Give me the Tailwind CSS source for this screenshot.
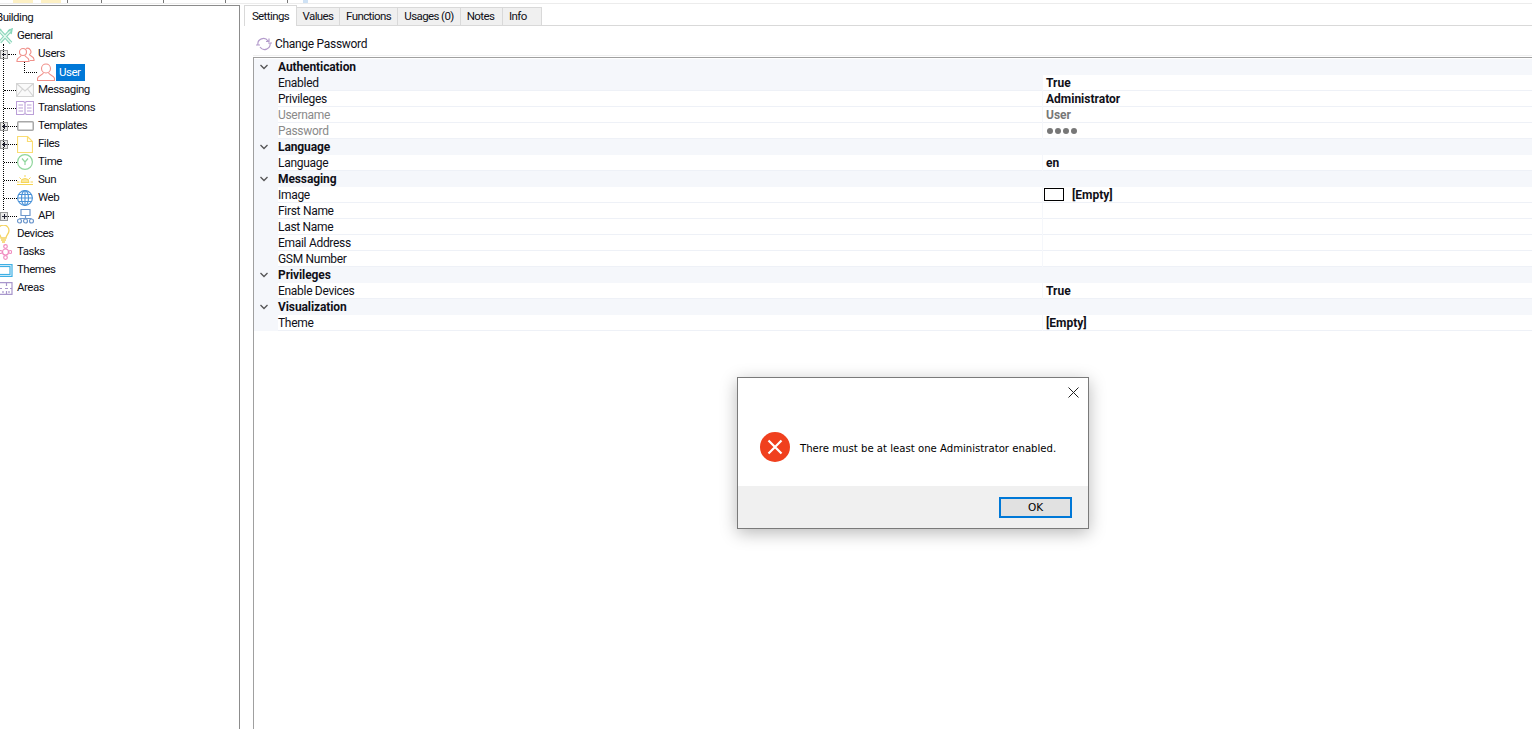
<!DOCTYPE html>
<html lang="en">
<head>
<meta charset="UTF-8">
<title>User settings</title>
<script src="https://cdn.jsdelivr.net/npm/@tailwindcss/browser@4"></script>
</head>
<body class="bg-white overflow-hidden h-[729px] relative text-[12px] text-[#101018] font-['Roboto','Noto_Sans',sans-serif]">

<!-- bottom edge of the ribbon above -->
<div class="flex h-[4px] border-b border-[#ececec]">
  <div class="w-[68px] h-[3px] border-r border-[#777] flex">
    <span class="ml-[13px] w-[20px] bg-[#fdf0c4]"></span>
    <span class="ml-[8px] w-[20px] bg-[#fdf0c4]"></span>
  </div>
  <div class="w-[34px] h-[3px] border-r border-[#777]"></div>
  <div class="w-[62px] h-[3px] border-r border-[#777]"></div>
  <div class="w-[62px] h-[3px] border-r border-[#777]"></div>
  <div class="w-[62px] h-[3px] border-r border-[#777]"></div>
  <div class="ml-[15px] w-[5px] h-[3px] bg-[#cfe2f5]"></div>
</div>

<div class="flex h-[725px]">
  <!-- Tree -->
  <aside class="relative w-[240px] shrink-0 mt-[1px] pt-[3px] border-t border-r border-[#8c8c8c] overflow-hidden">
    <div class="flex flex-col text-[11.500px] tracking-[-0.5px]">
      <div class="h-[18px] flex items-center -ml-[4px]">Building</div>

      <div class="h-[18px] flex items-center">
        <svg class="w-[15px] h-[17px] -ml-[2px] shrink-0" viewBox="0 0 15 17" fill="none">
          <path d="M2 3l11 12M13 2 2 14" stroke="#8ad6ba" stroke-width="3.400"/>
          <path d="M2 3l11 12M13 2 2 14" stroke="#e6f8f0" stroke-width="1.200"/>
          <path d="M0 5l3-4M10 3l4-2-1 5" stroke="#8ad6ba" stroke-width="1.500"/>
        </svg>
        <span class="ml-[4px]">General</span>
      </div>

      <div class="h-[18px] flex items-center">
        <span class="w-[8px] h-[9px] border border-[#9a9a9a] bg-[#e8e8e8] flex items-center justify-center shrink-0"><span class="w-[4px] h-px bg-[#223]"></span></span>
        <span class="w-[8px] border-t border-dotted border-black"></span>
        <svg class="w-[19px] h-[15px] shrink-0" viewBox="0 0 19 15" fill="none" stroke="#f0908a" stroke-width="1.100"><circle cx="7" cy="5" r="3.500"/><path d="M5 8.500C5 10 1 10.500 1 13.500V14.500h12v-1C13 10.500 9 10 9 8.500"/><path d="M10 1.500a3.500 3.500 0 0 1 3.500 6c0 1.500 4.500 2 4.500 5v1h-4"/></svg>
        <span class="ml-[3px]">Users</span>
      </div>

      <div class="h-[18px] flex items-center pl-[24px]">
        <span class="w-[13px] border-t border-dotted border-black"></span>
        <svg class="w-[18px] h-[18px] shrink-0" viewBox="0 0 18 18" fill="none" stroke="#f0908a" stroke-width="1.100"><circle cx="9" cy="5.500" r="4.500"/><path d="M6.500 9.500C6.500 12 .5 12.500 .5 15.500V17.500h17v-2c0-3-6-3.500-6-6"/></svg>
        <span class="bg-[#0078d7] text-white pl-[3px] h-[17px] w-[29px] ml-px leading-[17px]">User</span>
      </div>

      <div class="h-[18px] flex items-center pl-[4px]">
        <span class="w-[12px] border-t border-dotted border-black"></span>
        <svg class="w-[18px] h-[14px] shrink-0" viewBox="0 0 18 14" fill="#fafafa" stroke="#d4d4d4" stroke-width="1.200"><path d="M.5.500h17v13H.5z"/><path d="M.5.500 9 8l8.500-7.500M.5 13.500 6.500 6M17.500 13.500 11.500 6" fill="none"/></svg>
        <span class="ml-[4px]">Messaging</span>
      </div>

      <div class="h-[18px] flex items-center pl-[4px]">
        <span class="w-[12px] border-t border-dotted border-black"></span>
        <svg class="w-[18px] h-[14px] shrink-0" viewBox="0 0 18 14" fill="none" stroke="#bb9fd8" stroke-width="1.100"><path d="M.5.500h7l1.500 1 1.500-1h7v13h-7L9 12.500l-1.500 1h-7zM9 1.500v11M2.500 4h4.500M2.500 7h4.500M2.500 10h4.500M11 4h4.500M11 7h4.500M11 10h4.500"/></svg>
        <span class="ml-[4px]">Translations</span>
      </div>

      <div class="h-[18px] flex items-center">
        <span class="w-[8px] h-[9px] border border-[#9a9a9a] bg-[#e8e8e8] flex items-center justify-center shrink-0 relative"><span class="w-[5px] h-px bg-[#223]"></span><span class="absolute w-px h-[5px] bg-[#223]"></span></span>
        <span class="w-[9px] border-t border-dotted border-black"></span>
        <svg class="w-[17px] h-[10px] shrink-0" viewBox="0 0 17 10" fill="none" stroke="#a8a8a8" stroke-width="1.500"><rect x=".75" y=".75" width="15.500" height="8.500" rx="1"/></svg>
        <span class="ml-[4px]">Templates</span>
      </div>

      <div class="h-[18px] flex items-center">
        <span class="w-[8px] h-[9px] border border-[#9a9a9a] bg-[#e8e8e8] flex items-center justify-center shrink-0 relative"><span class="w-[5px] h-px bg-[#223]"></span><span class="absolute w-px h-[5px] bg-[#223]"></span></span>
        <span class="w-[9px] border-t border-dotted border-black"></span>
        <svg class="w-[16px] h-[17px] shrink-0" viewBox="0 0 16 17" fill="none" stroke="#f9dc72" stroke-width="1.200"><path d="M.5.500h10l5 5v11H.5zM10.500.500v5h5"/></svg>
        <span class="ml-[5px]">Files</span>
      </div>

      <div class="h-[18px] flex items-center pl-[4px]">
        <span class="w-[13px] border-t border-dotted border-black"></span>
        <svg class="w-[16px] h-[16px] shrink-0" viewBox="0 0 16 16" fill="none" stroke="#8fd69c" stroke-width="1.200"><circle cx="8" cy="8" r="7.400"/><path d="M5 4.500 8 8l3-3.500M8 8v3"/></svg>
        <span class="ml-[5px]">Time</span>
      </div>

      <div class="h-[18px] flex items-center pl-[4px]">
        <span class="w-[13px] border-t border-dotted border-black"></span>
        <svg class="w-[16px] h-[11px] shrink-0" viewBox="0 0 16 11" fill="#fbe79a" stroke="#f6d658"><path d="M4 7.500a4 4 0 0 1 8 0z"/><path d="M0 9.500h16M0 7h2.500M13.500 7H16M2.500 2.500l2 2M13.500 2.500l-2 2M8 0v2" fill="none"/></svg>
        <span class="ml-[5px]">Sun</span>
      </div>

      <div class="h-[18px] flex items-center pl-[4px]">
        <span class="w-[13px] border-t border-dotted border-black"></span>
        <svg class="w-[16px] h-[16px] shrink-0" viewBox="0 0 16 16" fill="none" stroke="#4a92d8" stroke-width="1.100"><circle cx="8" cy="8" r="7.400"/><ellipse cx="8" cy="8" rx="3.500" ry="7.400"/><path d="M8 .5v15M.5 8h15M1.500 4.500h13M1.500 11.500h13"/></svg>
        <span class="ml-[5px]">Web</span>
      </div>

      <div class="h-[18px] flex items-center">
        <span class="w-[8px] h-[9px] border border-[#9a9a9a] bg-[#e8e8e8] flex items-center justify-center shrink-0 relative"><span class="w-[5px] h-px bg-[#223]"></span><span class="absolute w-px h-[5px] bg-[#223]"></span></span>
        <span class="w-[9px] border-t border-dotted border-black"></span>
        <svg class="w-[17px] h-[15px] shrink-0" viewBox="0 0 17 15" fill="none" stroke="#6d97cc" stroke-width="1.200"><path d="M4 .5h9v6H4zM8.500 6.500V9M2.500 9.500h12"/><circle cx="2.500" cy="12" r="2"/><circle cx="8.500" cy="12" r="2"/><circle cx="14.500" cy="12" r="2"/></svg>
        <span class="ml-[4px]">API</span>
      </div>

      <div class="h-[18px] flex items-center">
        <svg class="w-[13px] h-[18px] -ml-[3px] shrink-0" viewBox="0 0 13 18" fill="none" stroke="#f4d25e" stroke-width="1.300"><path d="M4 13c0-3-3-4-3-7.500a5.500 5.500 0 0 1 11 0C12 9 9 10 9 13z"/><path d="M4 15h5M5 17h3"/></svg>
        <span class="ml-[7px]">Devices</span>
      </div>

      <div class="h-[18px] flex items-center">
        <svg class="w-[13px] h-[16px] -ml-px shrink-0" viewBox="0 0 13 16" fill="none" stroke="#f08cc0" stroke-width="1.200"><circle cx="6.500" cy="8" r="3"/><circle cx="6.500" cy="2.500" r="1.800"/><circle cx="6.500" cy="13.500" r="1.800"/><circle cx="1.800" cy="8" r="1.500"/><circle cx="11.200" cy="8" r="1.500"/></svg>
        <span class="ml-[5px]">Tasks</span>
      </div>

      <div class="h-[18px] flex items-center">
        <svg class="w-[13px] h-[13px] shrink-0" viewBox="0 0 13 13" fill="none" stroke="#3fb0e4" stroke-width="1.200"><rect x="-1" y=".6" width="13" height="11.800"/><rect x="-1" y="2.500" width="11" height="8"/></svg>
        <span class="ml-[4px]">Themes</span>
      </div>

      <div class="h-[18px] flex items-center">
        <svg class="w-[13px] h-[13px] shrink-0" viewBox="0 0 13 13" fill="none" stroke="#a896cc" stroke-width="1.200"><path d="M-1 .6h13v11.800H-1zM-1 6.500h3M5 6.500h3M10 6.500h2M6.500 1v3M6.500 9v3M3 9v2M9 9v2"/></svg>
        <span class="ml-[4px]">Areas</span>
      </div>
    </div>
    <!-- tree connector lines over the rows -->
    <div class="absolute left-[3px] top-[38px] h-[166px] border-l border-dotted border-black"></div>
    <div class="absolute left-[24px] top-[56px] h-[9px] border-l border-dotted border-black"></div>
  </aside>

  <!-- Main panel -->
  <main class="flex-1 min-w-0 pl-[4px] pt-[1px]">
    <div class="flex h-[21px] border-b border-[#d9d9d9] items-end text-[11.500px] tracking-[-0.6px]">
      <div class="h-[21px] w-[53px] bg-white border border-b-0 border-[#d9d9d9] flex items-start pt-[2px] justify-center -mb-px">Settings</div>
      <div class="h-[18px] w-[43px] bg-[#f0f0f0] border-t border-r border-[#d9d9d9] flex items-center justify-center">Values</div>
      <div class="h-[18px] w-[58px] bg-[#f0f0f0] border-t border-r border-[#d9d9d9] flex items-center justify-center">Functions</div>
      <div class="h-[18px] w-[63px] bg-[#f0f0f0] border-t border-r border-[#d9d9d9] flex items-center justify-center">Usages (0)</div>
      <div class="h-[18px] w-[42px] bg-[#f0f0f0] border-t border-r border-[#d9d9d9] flex items-center justify-center pr-[2px]">Notes</div>
      <div class="h-[18px] w-[39px] bg-[#f0f0f0] border-t border-r border-[#d9d9d9] flex items-center pl-[6px]">Info</div>
    </div>

    <div class="h-[30px] ml-[9px] pt-[7px] flex items-center border-b border-[#f0f0f0] mb-px">
      <svg class="w-[18px] h-[14px] ml-[2px] shrink-0" viewBox="0 0 18 14" fill="none" stroke="#b49ccc" stroke-width="1.200"><path d="M3 8a5.500 5.500 0 0 1 10-4M15 6a5.500 5.500 0 0 1-10 4M11 4.500h3v-3M1 8h4M13 6h4"/></svg>
      <span class="ml-[2px] tracking-[-0.3px]">Change Password</span>
    </div>

    <div class="ml-[9px] border-l border-t border-[#a0a0a0] h-[680px] pt-[1px] tracking-[-0.3px]">
      <div class="h-[16px] flex items-center bg-[#f5f7fb] font-bold tracking-[-0.1px]"><svg class="w-[24px] h-[8px] shrink-0" viewBox="0 0 24 8" fill="none" stroke="#555" stroke-width="1.300"><path d="M6.500 2 10 5.500 13.500 2"/></svg>Authentication</div>
      <div class="h-[16px] flex bg-[#f5f7fb]"><div class="w-[24px] shrink-0"></div><div class="w-[764px] shrink-0 flex items-center border-b border-[#eef1f7]">Enabled</div><div class="flex-1 flex items-center pl-[3px] ml-[1px] font-bold tracking-normal bg-white border-b border-[#eef1f7]">True</div></div>
      <div class="h-[16px] flex bg-[#f5f7fb]"><div class="w-[24px] shrink-0"></div><div class="w-[764px] shrink-0 flex items-center border-b border-[#eef1f7] bg-white">Privileges</div><div class="flex-1 flex items-center pl-[3px] ml-[1px] font-bold tracking-normal bg-white border-b border-[#eef1f7]">Administrator</div></div>
      <div class="h-[16px] flex bg-[#f5f7fb] text-[#8a8a8a]"><div class="w-[24px] shrink-0"></div><div class="w-[764px] shrink-0 flex items-center border-b border-[#eef1f7] bg-white">Username</div><div class="flex-1 flex items-center pl-[3px] ml-[1px] font-bold tracking-normal bg-white border-b border-[#eef1f7] text-[#777]">User</div></div>
      <div class="h-[16px] flex bg-[#f5f7fb] text-[#8a8a8a]"><div class="w-[24px] shrink-0"></div><div class="w-[764px] shrink-0 flex items-center border-b border-[#eef1f7] bg-white">Password</div><div class="flex-1 flex items-center gap-[2px] pl-[4px] ml-[1px] bg-white border-b border-[#eef1f7]"><span class="w-[6px] h-[6px] rounded-full bg-[#777]"></span><span class="w-[6px] h-[6px] rounded-full bg-[#777]"></span><span class="w-[6px] h-[6px] rounded-full bg-[#777]"></span><span class="w-[6px] h-[6px] rounded-full bg-[#777]"></span></div></div>

      <div class="h-[16px] flex items-center bg-[#f5f7fb] font-bold tracking-[-0.1px]"><svg class="w-[24px] h-[8px] shrink-0" viewBox="0 0 24 8" fill="none" stroke="#555" stroke-width="1.300"><path d="M6.500 2 10 5.500 13.500 2"/></svg>Language</div>
      <div class="h-[16px] flex bg-[#f5f7fb]"><div class="w-[24px] shrink-0"></div><div class="w-[764px] shrink-0 flex items-center border-b border-[#eef1f7] bg-white">Language</div><div class="flex-1 flex items-center pl-[3px] ml-[1px] font-bold tracking-normal bg-white border-b border-[#eef1f7]">en</div></div>

      <div class="h-[16px] flex items-center bg-[#f5f7fb] font-bold tracking-[-0.1px]"><svg class="w-[24px] h-[8px] shrink-0" viewBox="0 0 24 8" fill="none" stroke="#555" stroke-width="1.300"><path d="M6.500 2 10 5.500 13.500 2"/></svg>Messaging</div>
      <div class="h-[16px] flex bg-[#f5f7fb]"><div class="w-[24px] shrink-0"></div><div class="w-[764px] shrink-0 flex items-center border-b border-[#eef1f7] bg-white">Image</div><div class="flex-1 flex items-center ml-[1px] pl-[1px] font-bold tracking-normal bg-white border-b border-[#eef1f7]"><span class="w-[20px] h-[13px] border border-black mr-[8px]"></span>[Empty]</div></div>
      <div class="h-[16px] flex bg-[#f5f7fb]"><div class="w-[24px] shrink-0"></div><div class="w-[764px] shrink-0 flex items-center border-b border-[#eef1f7] bg-white">First Name</div><div class="flex-1 ml-[1px] bg-white border-b border-[#eef1f7]"></div></div>
      <div class="h-[16px] flex bg-[#f5f7fb]"><div class="w-[24px] shrink-0"></div><div class="w-[764px] shrink-0 flex items-center border-b border-[#eef1f7] bg-white">Last Name</div><div class="flex-1 ml-[1px] bg-white border-b border-[#eef1f7]"></div></div>
      <div class="h-[16px] flex bg-[#f5f7fb]"><div class="w-[24px] shrink-0"></div><div class="w-[764px] shrink-0 flex items-center border-b border-[#eef1f7] bg-white">Email Address</div><div class="flex-1 ml-[1px] bg-white border-b border-[#eef1f7]"></div></div>
      <div class="h-[16px] flex bg-[#f5f7fb]"><div class="w-[24px] shrink-0"></div><div class="w-[764px] shrink-0 flex items-center border-b border-[#eef1f7] bg-white">GSM Number</div><div class="flex-1 ml-[1px] bg-white border-b border-[#eef1f7]"></div></div>

      <div class="h-[16px] flex items-center bg-[#f5f7fb] font-bold tracking-[-0.1px]"><svg class="w-[24px] h-[8px] shrink-0" viewBox="0 0 24 8" fill="none" stroke="#555" stroke-width="1.300"><path d="M6.500 2 10 5.500 13.500 2"/></svg>Privileges</div>
      <div class="h-[16px] flex bg-[#f5f7fb]"><div class="w-[24px] shrink-0"></div><div class="w-[764px] shrink-0 flex items-center border-b border-[#eef1f7] bg-white">Enable Devices</div><div class="flex-1 flex items-center pl-[3px] ml-[1px] font-bold tracking-normal bg-white border-b border-[#eef1f7]">True</div></div>

      <div class="h-[16px] flex items-center bg-[#f5f7fb] font-bold tracking-[-0.1px]"><svg class="w-[24px] h-[8px] shrink-0" viewBox="0 0 24 8" fill="none" stroke="#555" stroke-width="1.300"><path d="M6.500 2 10 5.500 13.500 2"/></svg>Visualization</div>
      <div class="h-[16px] flex bg-[#f5f7fb]"><div class="w-[24px] shrink-0"></div><div class="w-[764px] shrink-0 flex items-center border-b border-[#eef1f7] bg-white">Theme</div><div class="flex-1 flex items-center pl-[3px] ml-[1px] font-bold tracking-normal bg-white border-b border-[#eef1f7]">[Empty]</div></div>
    </div>
  </main>
</div>

<!-- Error dialog -->
<div class="absolute left-[737px] top-[377px] w-[352px] h-[152px] bg-white border border-[#7a7a7a] shadow-[0_4px_16px_rgba(0,0,0,0.28)] flex flex-col">
  <div class="h-[108px] relative flex items-center pl-[22px] pt-[30px]">
    <svg class="absolute right-[9px] top-[9px] w-[11px] h-[11px]" viewBox="0 0 11 11" fill="none" stroke="#222"><path d="M.5.500l10 10M10.500.500l-10 10"/></svg>
    <svg class="w-[30px] h-[30px] shrink-0" viewBox="0 0 30 30"><circle cx="15" cy="15" r="15" fill="#f0401e"/><path d="M8.500 8.500l13 13M21.500 8.500l-13 13" stroke="#fff" stroke-width="2.200"/></svg>
    <span class="ml-[10px] translate-y-[2px] font-['DejaVu_Sans',sans-serif] text-[10.150px] text-black">There must be at least one Administrator enabled.</span>
  </div>
  <div class="flex-1 bg-[#f0f0f0] flex items-start justify-end pt-[11px] pr-[16px]">
    <div class="w-[73px] h-[21px] bg-[#e1e1e1] border-2 border-[#0078d7] flex items-center justify-center font-['DejaVu_Sans',sans-serif] text-[10.500px] text-black">OK</div>
  </div>
</div>
</body>
</html>
